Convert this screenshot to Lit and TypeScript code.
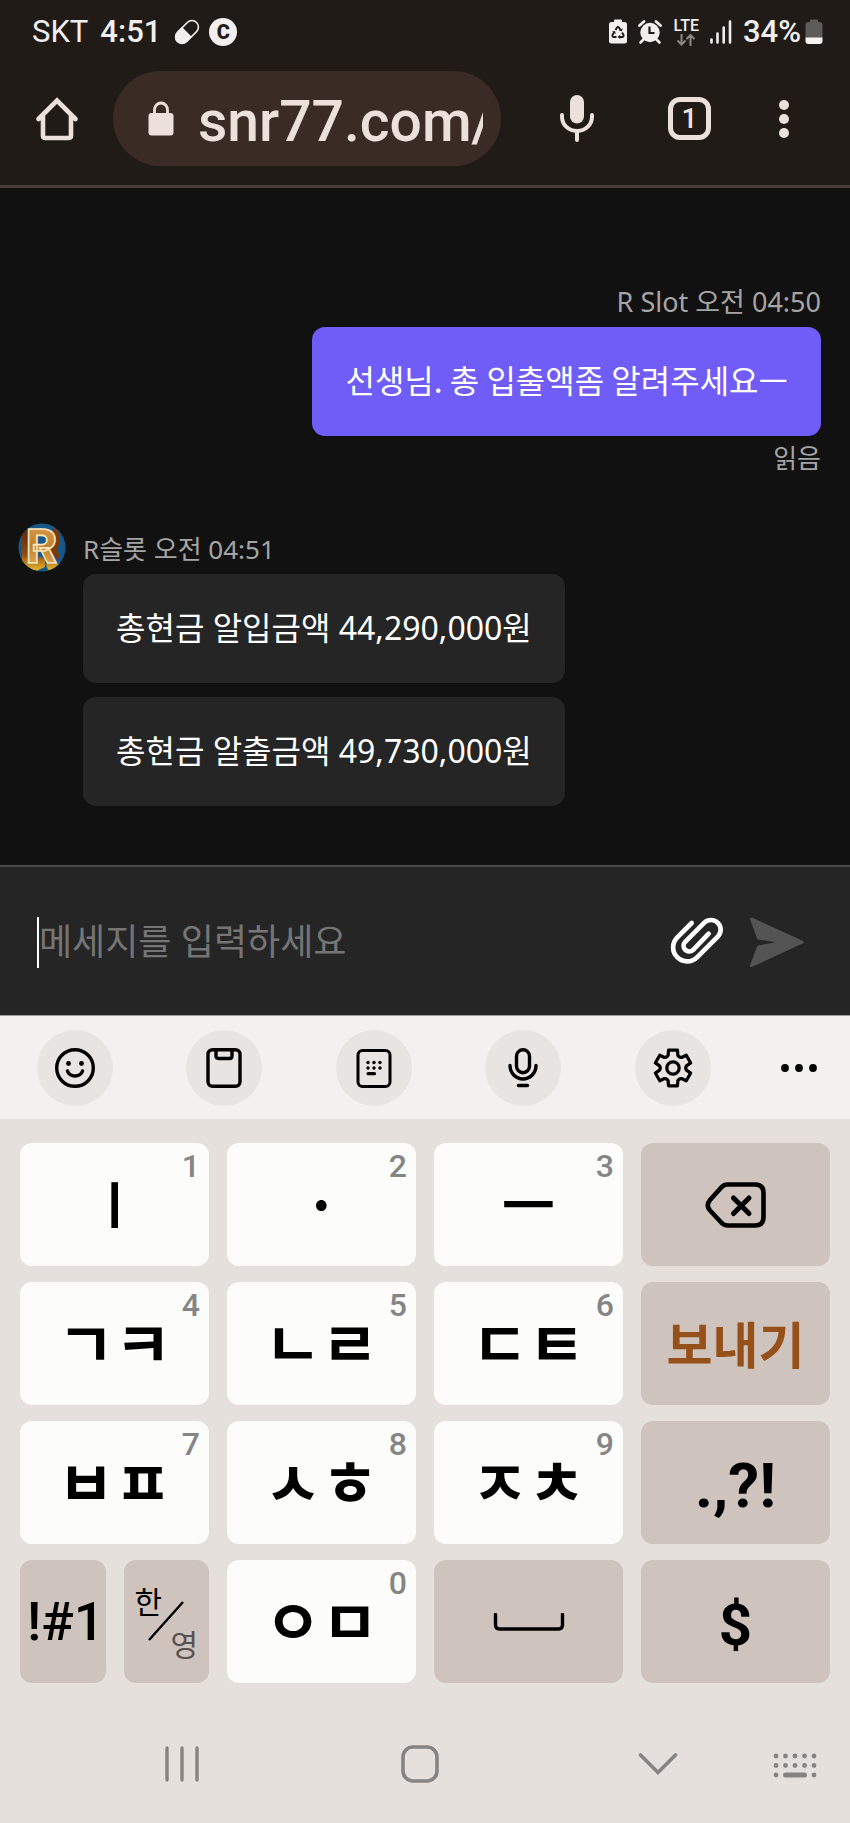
import { LitElement, html, css, svg, nothing } from "lit";
import { customElement, property, state } from "lit/decorators.js";
import { classMap } from "lit/directives/class-map.js";

const gearPath = (() => {
  const parts: string[] = [];
  const at = (r: number, deg: number) => {
    const a = (deg * Math.PI) / 180;
    return `${(20 + r * Math.sin(a)).toFixed(2)} ${(20 - r * Math.cos(a)).toFixed(2)}`;
  };
  for (let k = 0; k < 6; k++) {
    const c = k * 60;
    parts.push(`${k ? "L" : "M"}${at(13.6, c - 21)}`);
    parts.push(`L${at(18.4, c - 14)}`);
    parts.push(`L${at(18.4, c + 14)}`);
    parts.push(`L${at(13.6, c + 21)}`);
    parts.push(`Q${at(12, c + 30)} ${at(13.6, c + 39)}`);
  }
  return parts.join("") + "Z";
})();

const icon = (w: number, h: number, body: unknown) =>
  html`<svg width=${w} height=${h} viewBox="0 0 ${w} ${h}" fill="none" aria-hidden="true">${body}</svg>`;

const icons = {
  pill: icon(28, 28, svg`
    <g transform="rotate(-45 14 14)">
      <rect x="0.5" y="7.5" width="27" height="13" rx="6.5" stroke="#f0efee" stroke-width="1.6"/>
      <path d="M14 7H7a7 7 0 0 0 0 14h7z" fill="#f0efee"/>
    </g>`),
  recycle: icon(18, 26, svg`
    <path d="M5 3V1.500q0-1 1-1h6q1 0 1 1V3h2.500q2.500 0 2.500 2.500V22q0 2.500-2.500 2.500h-13Q0 24.500 0 22V5.500Q0 3 2.500 3z" fill="#f0efee"/>
    <path d="M6.500 11L8 8.500q1-1.300 2 0l1.500 2.500M13 13.500l1.500 2.500q.6 2-1.500 2h-2.500M7.500 18H5q-2.100 0-1.500-2L5 13.500" stroke="#201b17" stroke-width="1.900"/>
    <path d="M9.800 11.600l3.200.6.500-3zM11.200 15.800v4.200l-2.600-2.100zM3 12.600l3-.6.700 3z" fill="#201b17"/>`),
  alarm: icon(24, 26, svg`
    <circle cx="12" cy="13.500" r="9.700" fill="#f0efee"/>
    <path d="M1.500 6.500l4.500-4M22.500 6.500l-4.500-4" stroke="#f0efee" stroke-width="2.800" stroke-linecap="round"/>
    <path d="M5.500 20.500l-3 3M18.500 20.500l3 3" stroke="#f0efee" stroke-width="2.600" stroke-linecap="round"/>
    <path d="M11.500 7.500v6.500h5" stroke="#201b17" stroke-width="2.200"/>`),
  updown: icon(20, 12, svg`
    <path d="M5.500 0v10M1.500 6.500l4 4 4-4M14.500 12V1.500M10.500 5l4-4 4 4" stroke="#8b8784" stroke-width="2"/>`),
  signal: icon(22, 24, svg`
    <path d="M1.500 19.500v3M7.500 13.500v9M13.700 7.500v15M20 1.500v21" stroke="#f0efee" stroke-width="2.600" stroke-linecap="round"/>`),
  battery: icon(18, 26, svg`
    <path d="M5 3V1.500q0-1 1-1h6q1 0 1 1V3h1.500Q17.500 3 17.500 6v13H.5V6q0-3 3-3z" fill="#5f5b59"/>
    <path d="M.5 18.500h17V22q0 3-3 3h-11q-3 0-3-3z" fill="#f5f4f3"/>`),
  home: icon(44, 46, svg`
    <path d="M3.500 23L22 4.500 40.500 23M8 20v19.500q0 2.500 2.500 2.500h23q2.500 0 2.500-2.500V20" stroke="#ece0da" stroke-width="4.600" stroke-linecap="round"/>`),
  lock: icon(26, 36, svg`
    <rect x="0.500" y="12" width="25" height="22.500" rx="3" fill="#ece0da"/>
    <path d="M6.500 14V9a6.500 7 0 0 1 13 0v5" stroke="#ece0da" stroke-width="2.800"/>`),
  voice: icon(36, 50, svg`
    <rect x="11" y="1" width="14" height="28.500" rx="7" fill="#ece0da"/>
    <path d="M3 21v2a15 14 0 0 0 30 0v-2M18 37v9" stroke="#ece0da" stroke-width="4" stroke-linecap="round"/>`),
  more: icon(12, 40, svg`
    <g fill="#ece0da"><circle cx="6" cy="6" r="5"/><circle cx="6" cy="20" r="5"/><circle cx="6" cy="34" r="5"/></g>`),
  clip: html`<svg width="55" height="50" viewBox="60 55 165 150" fill="none" aria-hidden="true">
    <path d="M128 73L85 116A42 42 0 0 0 144 176L207 113A29 29 0 0 0 166 72L108 130A17 17 0 0 0 132 154L179 105" stroke="#fff" stroke-width="14" stroke-linecap="round"/></svg>`,
  send: icon(56, 52, svg`
    <path d="M3.500 3L54 26.200 3.500 49.500 10.500 31 36 26.200 10.500 22z" fill="#545454" stroke="#545454" stroke-width="3" stroke-linejoin="round"/>`),
  smile: icon(40, 40, svg`
    <circle cx="20" cy="20" r="18.300" stroke="#000" stroke-width="3.400"/>
    <circle cx="13.500" cy="15.500" r="2.400" fill="#000"/><circle cx="26.500" cy="15.500" r="2.400" fill="#000"/>
    <path d="M12.500 23a7.700 6.500 0 0 0 15 0" stroke="#000" stroke-width="3.400" stroke-linecap="round"/>`),
  clipboard: icon(40, 40, svg`
    <rect x="4" y="1.700" width="32" height="36.600" rx="4.500" stroke="#000" stroke-width="3.400"/>
    <path d="M12 2v6q0 2.500 2.500 2.500h11Q28 10.500 28 8V2" stroke="#000" stroke-width="3.400"/>`),
  textpad: icon(40, 40, svg`
    <rect x="4" y="2.500" width="32" height="36" rx="4.500" stroke="#000" stroke-width="3"/>
    <g fill="#000"><circle cx="14" cy="14.500" r="1.700"/><circle cx="20" cy="14.500" r="1.700"/><circle cx="26" cy="14.500" r="1.700"/>
    <circle cx="14" cy="20" r="1.700"/><circle cx="20" cy="20" r="1.700"/><circle cx="26" cy="20" r="1.700"/>
    <rect x="12.500" y="24" width="9.500" height="3.200" rx="1.500"/></g>`),
  mic: icon(40, 40, svg`
    <rect x="13.500" y="1.700" width="13" height="23" rx="6.500" stroke="#000" stroke-width="3.400"/>
    <path d="M7 17.500a13 13.500 0 0 0 26 0" stroke="#000" stroke-width="3.400" stroke-linecap="round"/>
    <path d="M15.500 37.500h9" stroke="#000" stroke-width="3.400" stroke-linecap="round"/>`),
  gear: icon(40, 40, svg`
    <path d=${gearPath} stroke="#000" stroke-width="3.200" stroke-linejoin="round"/>
    <circle cx="20" cy="20" r="6.200" stroke="#000" stroke-width="3.200"/>`),
  dots: icon(36, 10, svg`
    <g fill="#000"><circle cx="4" cy="5" r="3.900"/><circle cx="18" cy="5" r="3.900"/><circle cx="32" cy="5" r="3.900"/></g>`),
  backspace: icon(62, 48, svg`
    <path d="M22.500 3.500H50q8.500 0 8.500 8.500v24q0 8.500-8.500 8.500H22.500q-3.500 0-6-2.700L5 29.500q-4.500-5 0-10.500L16.500 6.200q2.500-2.700 6-2.700z" stroke="#000" stroke-width="4.600"/>
    <path d="M28.500 17l15.500 15.500M44 17L28.500 32.500" stroke="#000" stroke-width="5" stroke-linecap="round"/>`),
  space: icon(72, 18, svg`
    <path d="M2.500 1.500V12q0 4 4 4h59q4 0 4-4V1.500" stroke="#000" stroke-width="3.400" stroke-linecap="round"/>`),
  slash: icon(36, 40, svg`<path d="M1 39L35 1" stroke="#000" stroke-width="2.400"/>`),
  recents: icon(36, 38, svg`
    <path d="M3 3v32M18 3v32M33 3v32" stroke="#868482" stroke-width="3.400" stroke-linecap="round"/>`),
  square: icon(38, 38, svg`<rect x="2" y="2" width="34" height="34" rx="10" stroke="#868482" stroke-width="3.600"/>`),
  down: icon(40, 24, svg`<path d="M2.500 3L20 20.500 37.500 3" stroke="#868482" stroke-width="3.600" stroke-linecap="round"/>`),
  keyboard: icon(46, 30, svg`
    <g fill="#868482">
      ${[4, 13.500, 23, 32.500, 42].map((x) => svg`<circle cx=${x} cy="7" r="2.400"/><circle cx=${x} cy="16.500" r="2.400"/>`)}
      <circle cx="4" cy="26" r="2.400"/><circle cx="42" cy="26" r="2.400"/>
      <rect x="11" y="23.500" width="24" height="5" rx="2.500"/>
    </g>`),
};

@customElement("status-bar")
class StatusBar extends LitElement {
  static styles = css`
    :host {
      display: flex;
      justify-content: space-between;
      align-items: center;
      height: 64px;
      padding: 0 27px 0 32px;
      color: #f0efee;
      font-family: Roboto, sans-serif;
      font-size: 31px;
      line-height: 36px;
    }
    .side { display: flex; align-items: center; }
    .left { gap: 12px; }
    .clock, .percent { font-weight: 500; }
    .glyphs { display: flex; align-items: center; gap: 8px; }
    .badge {
      display: flex;
      align-items: center;
      justify-content: center;
      width: 28px;
      height: 28px;
      border-radius: 50%;
      background: #f0efee;
      color: #201b17;
      font-size: 20px;
      font-weight: 900;
    }
    .right { gap: 11px; }
    .lte { display: flex; flex-direction: column; align-items: center; font-size: 16px; font-weight: 500; line-height: 14px; gap: 1px; }
    .power { display: flex; align-items: center; gap: 4px; }
    svg { display: block; }
  `;
  render() {
    return html`
      <div class="side left">
        <span>SKT</span><span class="clock">4:51</span>
        <span class="glyphs">${icons.pill}<span class="badge">C</span></span>
      </div>
      <div class="side right">
        ${icons.recycle}${icons.alarm}
        <span class="lte"><span>LTE</span>${icons.updown}</span>
        ${icons.signal}
        <span class="power"><span class="percent">34%</span>${icons.battery}</span>
      </div>`;
  }
}

@customElement("browser-bar")
class BrowserBar extends LitElement {
  static styles = css`
    :host {
      display: flex;
      align-items: center;
      padding: 7px 60px 19px 35px;
      border-bottom: 3px solid #4a3d36;
      font-family: Roboto, sans-serif;
    }
    button { display: flex; align-items: center; justify-content: center; padding: 0; border: 0; background: none; color: #ece0da; font: inherit; }
    svg { display: block; flex: none; }
    .address {
      display: flex;
      align-items: center;
      flex: 1;
      min-width: 0;
      height: 95px;
      margin: 0 58px 0 34px;
      padding: 0 18px 0 35px;
      gap: 24px;
      box-sizing: border-box;
      border-radius: 48px;
      background: #3a2b24;
    }
    .url {
      flex: 1;
      min-width: 0;
      padding: 6px 0 0;
      border: 0;
      outline: 0;
      background: none;
      color: #ece0da;
      font: 500 57px/66px Roboto, sans-serif;
    }
    .tabs {
      width: 43px;
      height: 43px;
      margin: 0 67px 0 73px;
      box-sizing: border-box;
      border: 5px solid #ece0da;
      border-radius: 12px;
      font-size: 28px;
      font-weight: 500;
      line-height: 32px;
    }
  `;
  render() {
    return html`
      <button aria-label="홈">${icons.home}</button>
      <label class="address">${icons.lock}<input class="url" type="text" aria-label="주소" .value=${"snr77.com/"} /></label>
      <button aria-label="음성 검색">${icons.voice}</button>
      <button class="tabs" aria-label="탭 1개">1</button>
      <button aria-label="메뉴">${icons.more}</button>`;
  }
}

interface Group { mine: boolean; who: string; texts: string[]; receipt?: string; }

@customElement("chat-group")
class ChatGroup extends LitElement {
  @property({ attribute: false }) group!: Group;
  static styles = css`
    :host { display: flex; gap: 17px; color: #fff; }
    .avatar { flex: none; display: block; overflow: visible; }
    .stack { display: flex; flex-direction: column; flex: 1; align-items: flex-start; }
    .stack.mine { align-items: flex-end; }
    .stack.theirs { padding-top: 8px; }
    .meta { color: #a5a5a5; font-size: 26px; line-height: 36px; margin: 0 0 7px; }
    .mine .meta { font-size: 27px; }
    .mine .receipt { margin: 4px 0 0; font-size: 26px; }
    .bubble {
      margin: 0 0 14px;
      padding: 36px 33px 37px;
      border-radius: 13px;
      background: #252525;
      font-size: 32px;
      line-height: 36px;
    }
    .bubble:last-of-type { margin-bottom: 0; }
    .mine .bubble { padding: 34px 33px 39px; background: #705cf6; font-family: "Noto Sans CJK KR", sans-serif; }
  `;
  render() {
    const { mine, who, texts, receipt } = this.group;
    return html`
      ${mine ? nothing : html`
        <svg class="avatar" width="48" height="49" viewBox="0 0 48 49" role="img" aria-label="R슬롯">
          <defs>
            <linearGradient id="gold" x1="0" y1="0" x2="0" y2="1">
              <stop offset="0" stop-color="#dfa24e"/><stop offset=".5" stop-color="#bf8030"/><stop offset="1" stop-color="#eeb965"/>
            </linearGradient>
            <linearGradient id="side" x1="0" y1="0" x2="0" y2="1">
              <stop offset="0" stop-color="#5d2408"/><stop offset=".6" stop-color="#8a4a10"/><stop offset="1" stop-color="#f0b92c"/>
            </linearGradient>
            <clipPath id="round"><ellipse cx="24" cy="24.500" rx="23.500" ry="24"/></clipPath>
          </defs>
          <g clip-path="url(#round)">
            <rect width="48" height="49" fill="#16588a"/>
            <path d="M4 12L10 5V41H18V47L4 46zM18 41L22 33L27 36V44L18 48zM28 41H42V38L40 45L30 47z" fill="url(#side)"/>
            <path d="M36 5Q43 8 42 20L39 26Q41 30 42 38L30 26z" fill="#7a3a0c"/>
          </g>
          <text x="8" y="40" font-family="Roboto, sans-serif" font-weight="900" font-size="48" fill="url(#gold)" stroke="#fbe6b8" stroke-width="1.600">R</text>
        </svg>`}
      <div class="stack ${mine ? "mine" : "theirs"}">
        <div class="meta">${who}</div>
        ${texts.map((t) => html`<p class="bubble">${t}</p>`)}
        ${receipt ? html`<div class="meta receipt">${receipt}</div>` : nothing}
      </div>`;
  }
}

@customElement("message-composer")
class MessageComposer extends LitElement {
  @state() private text = "";
  static styles = css`
    :host {
      display: flex;
      align-items: center;
      height: 146px;
      padding: 2px 46px 0 37px;
      border-top: 2px solid #4b4b4b;
      background: #252525;
    }
    .field { display: flex; align-items: center; flex: 1; min-width: 0; }
    .caret { width: 2px; height: 51px; background: #fff; }
    input {
      flex: 1;
      min-width: 0;
      padding: 0;
      border: 0;
      outline: 0;
      background: none;
      color: #fff;
      font: inherit;
      font-size: 36px;
      line-height: 52px;
    }
    input::placeholder { color: #757575; opacity: 1; }
    button { display: flex; padding: 0; border: 0; background: none; }
    .send { margin-left: 24px; }
    svg { display: block; }
  `;
  render() {
    return html`
      <label class="field">
        <span class="caret"></span>
        <input type="text" aria-label="메세지" placeholder="메세지를 입력하세요" .value=${this.text}
          @input=${(e: Event) => (this.text = (e.target as HTMLInputElement).value)} />
      </label>
      <button aria-label="파일 첨부">${icons.clip}</button>
      <button class="send" aria-label="전송">${icons.send}</button>`;
  }
}

interface Key { label: unknown; hint?: string; kind?: string; name?: string; }

@customElement("soft-keyboard")
class SoftKeyboard extends LitElement {
  static styles = css`
    :host { display: block; background: #e6e0dd; color: #000; }
    button { padding: 0; border: 0; background: none; color: inherit; font: inherit; }
    svg { display: block; flex: none; }
    .tools {
      display: flex;
      align-items: center;
      justify-content: space-between;
      height: 104px;
      padding: 0 36px 0 37px;
      border-top: 1px solid #a09e9d;
      box-sizing: border-box;
      background: #f4f0ef;
    }
    .tool { display: flex; align-items: center; justify-content: center; width: 76px; height: 76px; border-radius: 50%; background: #e7e4e1; }
    .tool.plain { width: 30px; background: none; }
    .keys {
      display: grid;
      grid-template-columns: repeat(4, 1fr);
      grid-auto-rows: 123px;
      gap: 16px 18px;
      padding: 24px 20px 22px;
    }
    .pair { display: grid; grid-template-columns: 1fr 1fr; gap: 18px; }
    .key {
      position: relative;
      display: flex;
      align-items: center;
      justify-content: center;
      min-width: 0;
      padding-bottom: 6px;
      border-radius: 12px;
      background: #fcfdfb;
      font-family: "Noto Sans CJK KR", sans-serif;
      font-size: 62px;
      font-weight: 700;
      line-height: 72px;
    }
    .dark { background: #cec3bd; padding-bottom: 0; }
    .stem { font-size: 50px; }
    .bar { font-size: 58px; }
    .hint { position: absolute; top: 3px; right: 9px; color: #858585; font: 500 32px/40px Roboto, sans-serif; }
    .action { padding-bottom: 4px; color: #96511b; font-size: 50px; }
    .latin { padding-top: 6px; font-family: Roboto, sans-serif; font-size: 62px; }
    .money { padding-top: 6px; font-family: Roboto, sans-serif; font-size: 58px; }
    .symbols { padding-left: 6px; font-family: Roboto, sans-serif; font-size: 54px; font-weight: 500; }
    .lang { font-size: 30px; font-weight: 400; line-height: 32px; }
    .lang-grid { display: grid; grid-template-columns: 2px 34px 2px; grid-template-rows: 14px 28px 16px; place-items: center; place-content: center; }
    .on { grid-area: 1 / 1 / 2 / 2; }
    .cut { grid-area: 2 / 2 / 3 / 3; }
    .off { grid-area: 3 / 3 / 4 / 4; color: #57524f; }
    .nav {
      display: grid;
      grid-template-columns: 238fr 238fr 238fr 36fr;
      place-items: center;
      height: 118px;
      padding: 0 37px 0 63px;
    }
    .nav button { display: flex; align-items: center; justify-content: center; width: 100%; height: 100%; min-width: 0; }
  `;

  private rows: Key[] = [
    { label: "ㅣ", hint: "1", kind: "stem" }, { label: "·", hint: "2", kind: "bar" }, { label: "ㅡ", hint: "3", kind: "bar" },
    { label: icons.backspace, kind: "dark", name: "지우기" },
    { label: "ㄱㅋ", hint: "4" }, { label: "ㄴㄹ", hint: "5" }, { label: "ㄷㅌ", hint: "6" },
    { label: "보내기", kind: "dark action" },
    { label: "ㅂㅍ", hint: "7" }, { label: "ㅅㅎ", hint: "8" }, { label: "ㅈㅊ", hint: "9" },
    { label: ".,?!", kind: "dark latin" },
  ];

  private key(k: Key) {
    const classes: Record<string, boolean> = { key: true };
    (k.kind ?? "").split(" ").filter(Boolean).forEach((c) => (classes[c] = true));
    return html`<button class=${classMap(classes)} aria-label=${k.name ?? nothing}>
      <span>${k.label}</span>${k.hint ? html`<span class="hint">${k.hint}</span>` : nothing}
    </button>`;
  }

  render() {
    const tools: [string, unknown][] = [
      ["이모티콘", icons.smile], ["클립보드", icons.clipboard], ["텍스트 편집", icons.textpad],
      ["음성 입력", icons.mic], ["설정", icons.gear],
    ];
    return html`
      <div class="tools">
        ${tools.map(([name, i]) => html`<button class="tool" aria-label=${name}>${i}</button>`)}
        <button class="tool plain" aria-label="더보기">${icons.dots}</button>
      </div>
      <div class="keys">
        ${this.rows.map((k) => this.key(k))}
        <div class="pair">
          ${this.key({ label: "!#1", kind: "dark symbols" })}
          <button class="key dark lang">
            <span class="lang-grid"><span class="on">한</span><span class="cut">${icons.slash}</span><span class="off">영</span></span>
          </button>
        </div>
        ${this.key({ label: "ㅇㅁ", hint: "0" })}
        ${this.key({ label: icons.space, kind: "dark", name: "스페이스" })}
        ${this.key({ label: "$", kind: "dark money" })}
      </div>
      <div class="nav">
        <button aria-label="최근 앱">${icons.recents}</button>
        <button aria-label="홈 화면">${icons.square}</button>
        <button aria-label="키보드 닫기">${icons.down}</button>
        <button aria-label="키보드 전환">${icons.keyboard}</button>
      </div>`;
  }
}

@customElement("app-root")
class AppRoot extends LitElement {
  static styles = css`
    :host {
      display: flex;
      flex-direction: column;
      min-height: 100vh;
      background: #111;
      font-family: "Noto Sans", "Noto Sans CJK KR", sans-serif;
    }
    .top { background: #201b17; }
    .chat {
      display: flex;
      flex-direction: column;
      justify-content: flex-end;
      flex: 1;
      gap: 47px;
      padding: 40px 29px 59px 18px;
    }
  `;
  private groups: Group[] = [
    { mine: true, who: "R Slot 오전 04:50", texts: ["선생님. 총 입출액좀 알려주세요ㅡ"], receipt: "읽음" },
    { mine: false, who: "R슬롯 오전 04:51", texts: ["총현금 알입금액 44,290,000원", "총현금 알출금액 49,730,000원"] },
  ];
  render() {
    return html`
      <header class="top"><status-bar></status-bar><browser-bar></browser-bar></header>
      <main class="chat">${this.groups.map((g) => html`<chat-group .group=${g}></chat-group>`)}</main>
      <message-composer></message-composer>
      <soft-keyboard></soft-keyboard>`;
  }
}
